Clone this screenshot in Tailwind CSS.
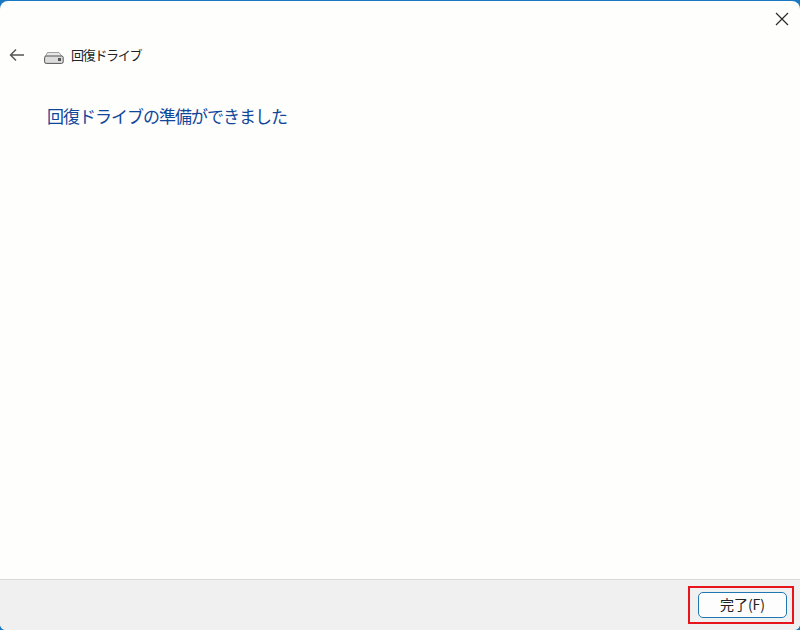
<!DOCTYPE html>
<html lang="ja">
<head>
<meta charset="utf-8">
<script src="https://cdn.jsdelivr.net/npm/@tailwindcss/browser@4"></script>
</head>
<body class="bg-[#0f6cbd]">
<div class="w-[800px] h-[630px] pt-px bg-[#1a78c2]">
  <div class="w-[800px] h-[629px] bg-[#fefefd] rounded-t-[8px] rounded-b-[6px] overflow-hidden flex flex-col font-['Noto_Sans_CJK_JP','Noto_Sans',sans-serif]">
    <div class="h-[578px] flex flex-col">
      <div class="h-[36px] flex justify-end items-start pt-[11px] pr-[11px]">
        <svg width="14" height="14" viewBox="0 0 14 14" fill="none" stroke="#2a2a2a" stroke-width="1.2"><path d="M1 1 L13 13 M13 1 L1 13"/></svg>
      </div>
      <div class="h-[36px] flex items-center pl-[9px]">
        <svg width="16" height="14" viewBox="0 0 16 14" fill="none" stroke="#555" stroke-width="1.4"><path d="M15 7 H1.5 M7 1.5 L1.5 7 L7 12.5"/></svg>
        <svg class="ml-[19px] mt-[5px]" width="20" height="12" viewBox="0 0 20 12">
          <path d="M3.5 .5 H15 L18.5 5 H1 Z" fill="#e6e6e6" stroke="#8a8a8a" stroke-width=".8"/>
          <rect x=".6" y="4" width="18.6" height="7.4" rx="1.6" fill="#dcdcdc" stroke="#555" stroke-width="1"/>
          <rect x="14" y="6" width="3" height="3" fill="#555"/>
        </svg>
        <span class="ml-[7px] text-[13px] leading-[20px] tracking-[-1.3px] text-[#222]">回復ドライブ</span>
      </div>
      <h1 class="ml-[47px] mt-[30px] text-[17px] leading-[26px] tracking-[-1px] font-normal text-[#10479b]">回復ドライブの準備ができました</h1>
    </div>
    <div class="h-[51px] bg-[#f0f0f0] border-t border-[#d9d9d9] flex justify-end items-start pt-[6px] pr-[6px]">
      <div class="border-2 border-[#e8141c] pl-[8px] pr-[5px] py-[4px]">
        <button class="w-[89px] h-[26px] pb-[2px] bg-[#fdfdfd] border-[1.5px] border-[#1f78b4] rounded-[5px] text-[14px] leading-[20px] text-[#222] flex items-center justify-center">完了(F)</button>
      </div>
    </div>
  </div>
</div>
</body>
</html>
